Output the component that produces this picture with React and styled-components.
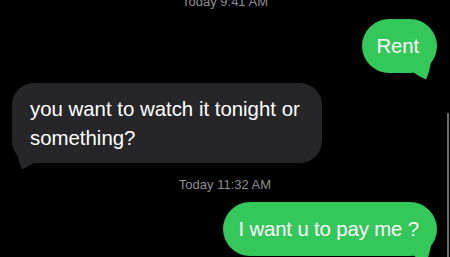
import React from "react";
import styled, { createGlobalStyle } from "styled-components";

const green = "#34c759";
const grey = "#262628";

const GlobalStyle = createGlobalStyle`
  html, body {
    margin: 0;
    padding: 0;
    background: #000;
  }
`;

const Screen = styled.div`
  position: relative;
  width: 450px;
  height: 257px;
  overflow: hidden;
  background: #000;
  display: flex;
  flex-direction: column;
  font-family: "Liberation Sans", Arial, sans-serif;
`;

const Stamp = styled.div`
  margin-top: ${(p) => p.$gap}px;
  text-align: center;
  font-size: 13px;
  line-height: 16px;
  color: #8e8e93;
`;

const Row = styled.div`
  display: flex;
  justify-content: ${(p) => (p.$from === "me" ? "flex-end" : "flex-start")};
  margin-top: ${(p) => p.$gap}px;
  padding: 0 ${(p) => (p.$from === "me" ? "13px" : "0")} 0
    ${(p) => (p.$from === "me" ? "0" : "12px")};
`;

const Bubble = styled.div`
  position: relative;
  box-sizing: border-box;
  max-width: ${(p) => p.$max || 320}px;
  background: ${(p) => (p.$from === "me" ? green : grey)};
  color: #fff;
  font-size: 20.4px;
  line-height: ${(p) => (p.$from === "me" ? 24 : 29)}px;
  letter-spacing: ${(p) => (p.$from === "me" ? "-0.15px" : "0")};
  border-radius: ${(p) => (p.$from === "me" ? 27 : 22)}px;
  padding: ${(p) =>
    p.$from === "me" ? "15px 18px 15px 15px" : "12px 20px 10px 18px"};
`;

const Tail = styled.svg`
  position: absolute;
  bottom: -7px;
  width: 22px;
  height: 20px;
  ${(p) => (p.$from === "me" ? "right: 4px;" : "left: 3px; transform: scaleX(-1);")}
  fill: ${(p) => (p.$from === "me" ? green : grey)};
`;

const ScrollEdge = styled.div`
  position: absolute;
  right: 1px;
  top: 113px;
  bottom: 0;
  width: 2px;
  background: #6b6b6e;
`;

const BubbleTail = ({ from }) => (
  <Tail $from={from} viewBox="0 0 22 20">
    <path d="M2 2 L20 2 C19 9 17 15 15 19.5 C11 18 6 15 2 12 Z" />
  </Tail>
);

const Message = ({ from, gap, max, children }) => (
  <Row $from={from} $gap={gap}>
    <Bubble $from={from} $max={max}>
      {children}
      <BubbleTail from={from} />
    </Bubble>
  </Row>
);

export default function App() {
  return (
    <>
      <GlobalStyle />
      <Screen>
        <Stamp $gap={-6}>Today 9:41 AM</Stamp>
        <Message from="me" gap={9}>
          Rent
        </Message>
        <Message from="them" gap={10} max={310}>
          you want to watch it tonight or something?
        </Message>
        <Stamp $gap={14}>Today 11:32 AM</Stamp>
        <Message from="me" gap={9}>
          I want u to pay me ?
        </Message>
        <ScrollEdge />
      </Screen>
    </>
  );
}
